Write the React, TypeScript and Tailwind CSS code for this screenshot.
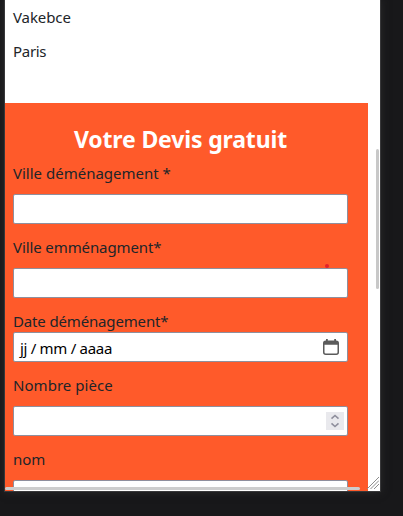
import type { ReactNode } from "react";

function Label({ children, className = "" }: { children: ReactNode; className?: string }) {
  return <div className={`h-6 shrink-0 whitespace-nowrap text-[15px] leading-[23px] text-[#212529] ${className}`}>{children}</div>;
}

function Field({ children }: { children?: ReactNode }) {
  return (
    <div className="flex h-[30px] w-[335px] shrink-0 items-center justify-between rounded-[2px] border border-[#8f8f9d] bg-white">
      {children}
    </div>
  );
}

export default function App() {
  return (
    <div className="h-[516px] w-[403px] overflow-hidden bg-[#18181a] pl-[5px] font-['Noto_Sans','Open_Sans',sans-serif]">
      <div className="relative h-[491px] w-[375px] overflow-hidden bg-white shadow-[0_0_0_1px_#38383a,0_0_8px_1px_#29292b]">
        <div className="flex h-[103px] flex-col gap-[10px] pt-[6px] pl-2">
          <Label className="tracking-[-0.1px]">Vakebce</Label>
          <Label className="tracking-[-0.3px]">Paris</Label>
        </div>

        <div className="flex h-[420px] w-[363px] flex-col bg-[#ff5a2a] pl-2 pt-[22px]">
          <h2 className="mb-2 h-[29px] w-[335px] shrink-0 whitespace-nowrap text-center text-[23px] font-bold leading-[28px] tracking-[-0.15px] text-white">
            Votre Devis gratuit
          </h2>
          <Label className="mb-2">Ville déménagement *</Label>
          <Field />
          <Label className="mt-3 mb-2 tracking-[-0.1px]">Ville emménagment*</Label>
          <Field />
          <Label className="mt-3 -mb-[2px] tracking-[-0.15px]">Date déménagement*</Label>
          <Field>
            <span className="whitespace-nowrap pl-[6px] pt-[2px] text-[15px] leading-6 tracking-[-0.3px] text-black">
              jj / mm / aaaa
            </span>
            <svg className="mr-2 mb-px h-4 w-4" viewBox="0 0 16 16" fill="none">
              <rect x="0.75" y="2.25" width="14.5" height="13" rx="2" stroke="#5b5b5b" strokeWidth="1.5" />
              <path d="M1 2.5h14v3.3H1zM3 0h1.8v3H3zM11.2 0H13v3h-1.8z" fill="#5b5b5b" />
            </svg>
          </Field>
          <Label className="mt-3 mb-2 tracking-[0.05px]">Nombre pièce</Label>
          <Field>
            <span />
            <span className="mr-[3px] flex h-[18px] w-[18px] items-center justify-center bg-[#e9e9ed]">
              <svg className="h-[14px] w-[10px]" viewBox="0 0 10 14" fill="none" stroke="#8f8f9d" strokeWidth="1.6">
                <path d="M1.5 4.7 5 1.5l3.5 3.2M1.5 9.3 5 12.5l3.5-3.2" />
              </svg>
            </span>
          </Field>
          <Label className="mt-3 mb-2">nom</Label>
          <Field />
        </div>

        <span className="absolute left-[320px] top-[264px] h-1 w-1 rounded-full bg-[#e4222b]" />
        <span className="absolute left-[371px] top-[149px] h-[140px] w-[3px] rounded-full bg-[#c8c8c8]" />
        <span className="absolute left-0 top-[487px] h-[3px] w-[355px] rounded-full bg-[#cdcdcd]" />
        <svg className="absolute left-[362px] top-[477px] h-3 w-3" viewBox="0 0 12 12" fill="none" stroke="#8c8c8c" strokeWidth="1">
          <path d="M0 12 12 0M3.5 12 12 3.5M7 12l5-5" />
        </svg>
      </div>
    </div>
  );
}
